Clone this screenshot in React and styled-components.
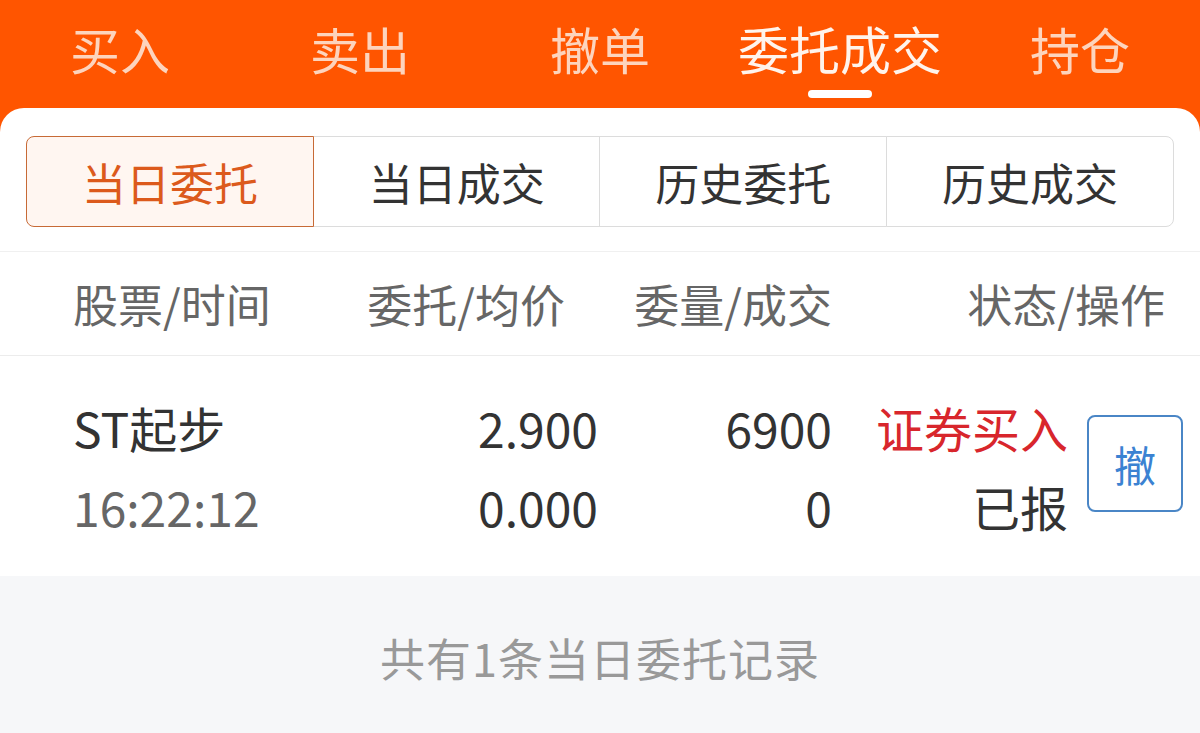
import React, { useState } from "react";
import styled, { createGlobalStyle } from "styled-components";

const GlobalStyle = createGlobalStyle`
  html, body {
    margin: 0;
    padding: 0;
    background: #ff5500;
  }
  body {
    font-family: "Noto Sans CJK SC", "Noto Sans", sans-serif;
  }
  * { box-sizing: border-box; }
`;

const Page = styled.div`
  width: 1200px;
  height: 733px;
  overflow: hidden;
  background: #ff5500;
  display: flex;
  flex-direction: column;
`;

// 顶部导航
const TopTabs = styled.div`
  display: grid;
  grid-template-columns: repeat(5, 1fr);
  height: 108px;
  flex-shrink: 0;
`;

const TopTab = styled.div`
  display: flex;
  flex-direction: column;
  align-items: center;
  padding-top: 20px;
  cursor: pointer;
`;

const TopLabel = styled.span`
  font-size: ${(p) => (p.$active ? "51px" : "50px")};
  line-height: 56px;
  color: ${(p) => (p.$active ? "#fff4ec" : "#fdd4bd")};
  white-space: nowrap;
`;

const Indicator = styled.span`
  margin-top: 14px;
  width: 64px;
  height: 8px;
  border-radius: 4px;
  background: ${(p) => (p.$active ? "#ffffff" : "transparent")};
`;

const Panel = styled.div`
  flex: 1;
  background: #ffffff;
  border-radius: 24px 24px 0 0;
  display: flex;
  flex-direction: column;
`;

// 分段切换
const SegmentWrap = styled.div`
  padding: 28px 26px 24px;
`;

const Segments = styled.div`
  display: flex;
  height: 91px;
`;

const Segment = styled.div`
  flex: 1;
  display: flex;
  align-items: center;
  justify-content: center;
  font-size: 44px;
  color: ${(p) => (p.$active ? "#dc5a1c" : "#333333")};
  background: ${(p) => (p.$active ? "#fff6f1" : "#ffffff")};
  border: 1.5px solid ${(p) => (p.$active ? "#c76a36" : "#dcdcdc")};
  position: relative;
  z-index: ${(p) => (p.$active ? 1 : 0)};
  & + & { margin-left: -1.5px; }
  &:first-child { border-radius: 8px 0 0 8px; }
  &:last-child { border-radius: 0 8px 8px 0; }
`;

// 表格
const HeadRow = styled.div`
  display: grid;
  grid-template-columns: 227px 265px 267px 1fr;
  padding: 0 17px 0 73px;
  height: 105px;
  align-items: center;
  border-top: 1px solid #f0f0f0;
  border-bottom: 1.5px solid #ececec;
  font-size: 45px;
  color: #666666;
`;

const HeadCell = styled.div`
  text-align: ${(p) => (p.$left ? "left" : "right")};
  padding-right: ${(p) => (p.$pad ? "18px" : "0")};
  white-space: nowrap;
`;

const DataRow = styled.div`
  display: grid;
  grid-template-columns: 260px 265px 234px 1fr;
  padding: 40px 17px 39px 73px;
  align-items: center;
`;

const Stack = styled.div`
  display: flex;
  flex-direction: column;
  gap: 17px;
  align-items: ${(p) => (p.$left ? "flex-start" : "flex-end")};
`;

const Line = styled.span`
  font-size: 48px;
  line-height: 62px;
  color: ${(p) => p.$color || "#333333"};
  white-space: nowrap;
`;

const StatusCell = styled.div`
  display: flex;
  justify-content: flex-end;
  align-items: center;
  gap: 19px;
`;

const CancelBtn = styled.button`
  width: 96px;
  height: 97px;
  border: 2px solid #4a86c6;
  border-radius: 8px;
  background: #ffffff;
  color: #3b82d2;
  font-family: inherit;
  font-size: 42px;
  padding: 0;
  margin-top: -6px;
  cursor: pointer;
`;

const Footer = styled.div`
  flex: 1;
  background: #f6f7f9;
  text-align: center;
  padding-top: 54px;
  font-size: 45px;
  line-height: 56px;
  color: #999999;
  letter-spacing: 1px;
`;

const topTabs = ["买入", "卖出", "撤单", "委托成交", "持仓"];
const segments = ["当日委托", "当日成交", "历史委托", "历史成交"];

const orders = [
  {
    name: "ST起步",
    time: "16:22:12",
    price: "2.900",
    avg: "0.000",
    qty: "6900",
    deal: "0",
    type: "证券买入",
    status: "已报",
  },
];

const App = () => {
  const [tab, setTab] = useState(3);
  const [seg, setSeg] = useState(0);

  return (
    <>
      <GlobalStyle />
      <Page>
        <TopTabs>
          {topTabs.map((t, i) => (
            <TopTab key={t} onClick={() => setTab(i)}>
              <TopLabel $active={i === tab}>{t}</TopLabel>
              <Indicator $active={i === tab} />
            </TopTab>
          ))}
        </TopTabs>
        <Panel>
          <SegmentWrap>
            <Segments>
              {segments.map((s, i) => (
                <Segment key={s} $active={i === seg} onClick={() => setSeg(i)}>
                  {s}
                </Segment>
              ))}
            </Segments>
          </SegmentWrap>
          <HeadRow>
            <HeadCell $left>股票/时间</HeadCell>
            <HeadCell>委托/均价</HeadCell>
            <HeadCell>委量/成交</HeadCell>
            <HeadCell $pad>状态/操作</HeadCell>
          </HeadRow>
          {orders.map((o) => (
            <DataRow key={o.name + o.time}>
              <Stack $left>
                <Line>{o.name}</Line>
                <Line $color="#666666">{o.time}</Line>
              </Stack>
              <Stack>
                <Line>{o.price}</Line>
                <Line>{o.avg}</Line>
              </Stack>
              <Stack>
                <Line>{o.qty}</Line>
                <Line>{o.deal}</Line>
              </Stack>
              <StatusCell>
                <Stack>
                  <Line $color="#d8262c">{o.type}</Line>
                  <Line>{o.status}</Line>
                </Stack>
                <CancelBtn>撤</CancelBtn>
              </StatusCell>
            </DataRow>
          ))}
          <Footer>共有{orders.length}条当日委托记录</Footer>
        </Panel>
      </Page>
    </>
  );
};

export default App;
